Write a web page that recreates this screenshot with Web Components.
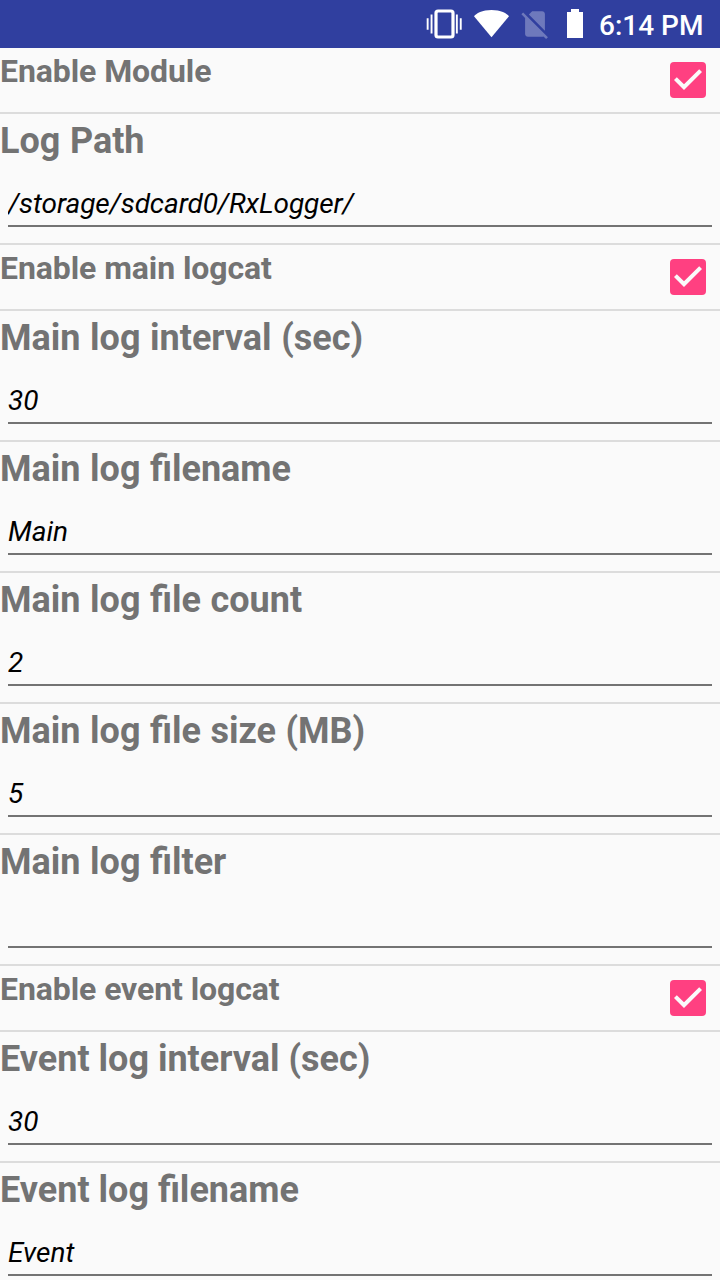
<!DOCTYPE html>
<html lang="en">
<head>
<meta charset="utf-8">
<title>Logger settings</title>
<style>
  html, body {
    margin: 0;
    height: 1280px;
    overflow: hidden;
    background: #fafafa;
    font-family: Roboto, sans-serif;
  }
</style>
</head>
<body>
<settings-screen></settings-screen>

<script>
const statusBarStyles = `
  <style>
    :host {
      display: flex;
      justify-content: flex-end;
      height: 48px;
      box-sizing: border-box;
      padding-right: 17px;
      background: #303f9f;
      color: #fff;
    }

    svg {
      display: block;
      flex: none;
    }

    .time {
      margin-left: 7px;
      width: 104px;
      font-size: 28px;
      font-weight: 500;
      line-height: 51px;
      white-space: nowrap;
    }
  </style>
`;

class StatusBar extends HTMLElement {
  constructor() {
    super();
    this.root = this.attachShadow({ mode: 'open' });
    this.root.innerHTML = `
      ${statusBarStyles}
      <svg width="168" height="48" viewBox="424 0 168 48" fill="#fff">
        <rect x="436" y="11" width="17" height="26" rx="2" fill="none" stroke="#fff" stroke-width="3.2"/>
        <path d="M426.7 18.3h1.9v11.4h-1.9zM430.6 14.5h1.9v19h-1.9zM455.9 14.5h1.9v19h-1.9zM459.8 18.3h1.9v11.4h-1.9z"/>
        <path d="M491.5 37.2L474 16.3C475.8 13.5 482.5 10 491.5 10S507.2 13.5 509 16.3z"/>
        <path transform="translate(518 7) scale(1.417)" fill-opacity=".3" d="M18.99 5c0-1.1-.89-2-1.99-2h-7L7.66 5.34 19 16.68 18.99 5zM3.65 3.88L2.38 5.15 5 7.77V19c0 1.1.9 2 2 2h10.01c.35 0 .67-.1.96-.26l1.88 1.88 1.27-1.27L3.65 3.88z"/>
        <path d="M571 9h8v3h4v26h-16V12h4z"/>
      </svg>
      <div class="time"><slot></slot></div>
    `;
  }
}

class CheckBox extends HTMLElement {
  constructor() {
    super();
    this.root = this.attachShadow({ mode: 'open' });
    this.root.innerHTML = `
      <style>
        :host {
          display: block;
          width: 36px;
          height: 36px;
          border-radius: 4px;
          background: #ff4081;
        }

        svg {
          display: block;
        }
      </style>
      <svg width="36" height="36" viewBox="3 3 18 18">
        <path fill="#fafafa" d="M10 17l-5-5 1.41-1.41L10 14.17l7.59-7.59L19 8l-9 9z"/>
      </svg>
    `;
  }
}

class SwitchRow extends HTMLElement {
  constructor() {
    super();
    this.root = this.attachShadow({ mode: 'open' });
    this.root.innerHTML = `
      <style>
        :host {
          display: flex;
          justify-content: space-between;
          align-items: flex-start;
          height: 66px;
          box-sizing: border-box;
          border-bottom: 2px solid #dcdcdc;
        }

        .label {
          color: #737373;
          font-size: 32px;
          font-weight: 700;
          letter-spacing: -0.09px;
          line-height: 46px;
          white-space: nowrap;
        }

        check-box {
          margin: 14px 14px 0 0;
        }
      </style>
      <div class="label"><slot></slot></div>
      <check-box></check-box>
    `;
  }
}

class FieldRow extends HTMLElement {
  constructor() {
    super();
    this.root = this.attachShadow({ mode: 'open' });
    this.root.innerHTML = `
      <style>
        :host {
          display: block;
          height: 131px;
          box-sizing: border-box;
          border-bottom: 2px solid #dcdcdc;
        }

        .label {
          color: #737373;
          font-size: 36px;
          font-weight: 700;
          line-height: 54px;
          white-space: nowrap;
        }

        .value {
          height: 33px;
          margin: 0 8px;
          padding: 19px 0 5px;
          border-bottom: 2px solid #737373;
          overflow: hidden;
          color: #000;
          font-size: 28px;
          font-style: italic;
          line-height: 33px;
          white-space: nowrap;
        }
      </style>
      <div class="label"><slot></slot></div>
      <div class="value"><slot name="value"></slot></div>
    `;
  }
}

class SettingsScreen extends HTMLElement {
  constructor() {
    super();
    this.root = this.attachShadow({ mode: 'open' });
    this.root.innerHTML = `
      <style>
        :host {
          display: block;
          width: 720px;
          height: 1280px;
          overflow: hidden;
          background: #fafafa;
        }

        .main {
          word-spacing: 0.6px;
        }

        .path {
          letter-spacing: -0.1px;
        }
      </style>
      <status-bar>6:14 PM</status-bar>
      <switch-row>Enable Module</switch-row>
      <field-row class="main">Log Path<span slot="value" class="path">/storage/sdcard0/RxLogger/</span></field-row>
      <switch-row>Enable main logcat</switch-row>
      <field-row class="main">Main log interval (sec)<span slot="value">30</span></field-row>
      <field-row class="main">Main log filename<span slot="value">Main</span></field-row>
      <field-row class="main">Main log file count<span slot="value">2</span></field-row>
      <field-row class="main">Main log file size (MB)<span slot="value">5</span></field-row>
      <field-row class="main">Main log filter</field-row>
      <switch-row>Enable event logcat</switch-row>
      <field-row>Event log interval (sec)<span slot="value">30</span></field-row>
      <field-row>Event log filename<span slot="value">Event</span></field-row>
    `;
  }
}

customElements.define('status-bar', StatusBar);
customElements.define('check-box', CheckBox);
customElements.define('switch-row', SwitchRow);
customElements.define('field-row', FieldRow);
customElements.define('settings-screen', SettingsScreen);
</script>
</body>
</html>
